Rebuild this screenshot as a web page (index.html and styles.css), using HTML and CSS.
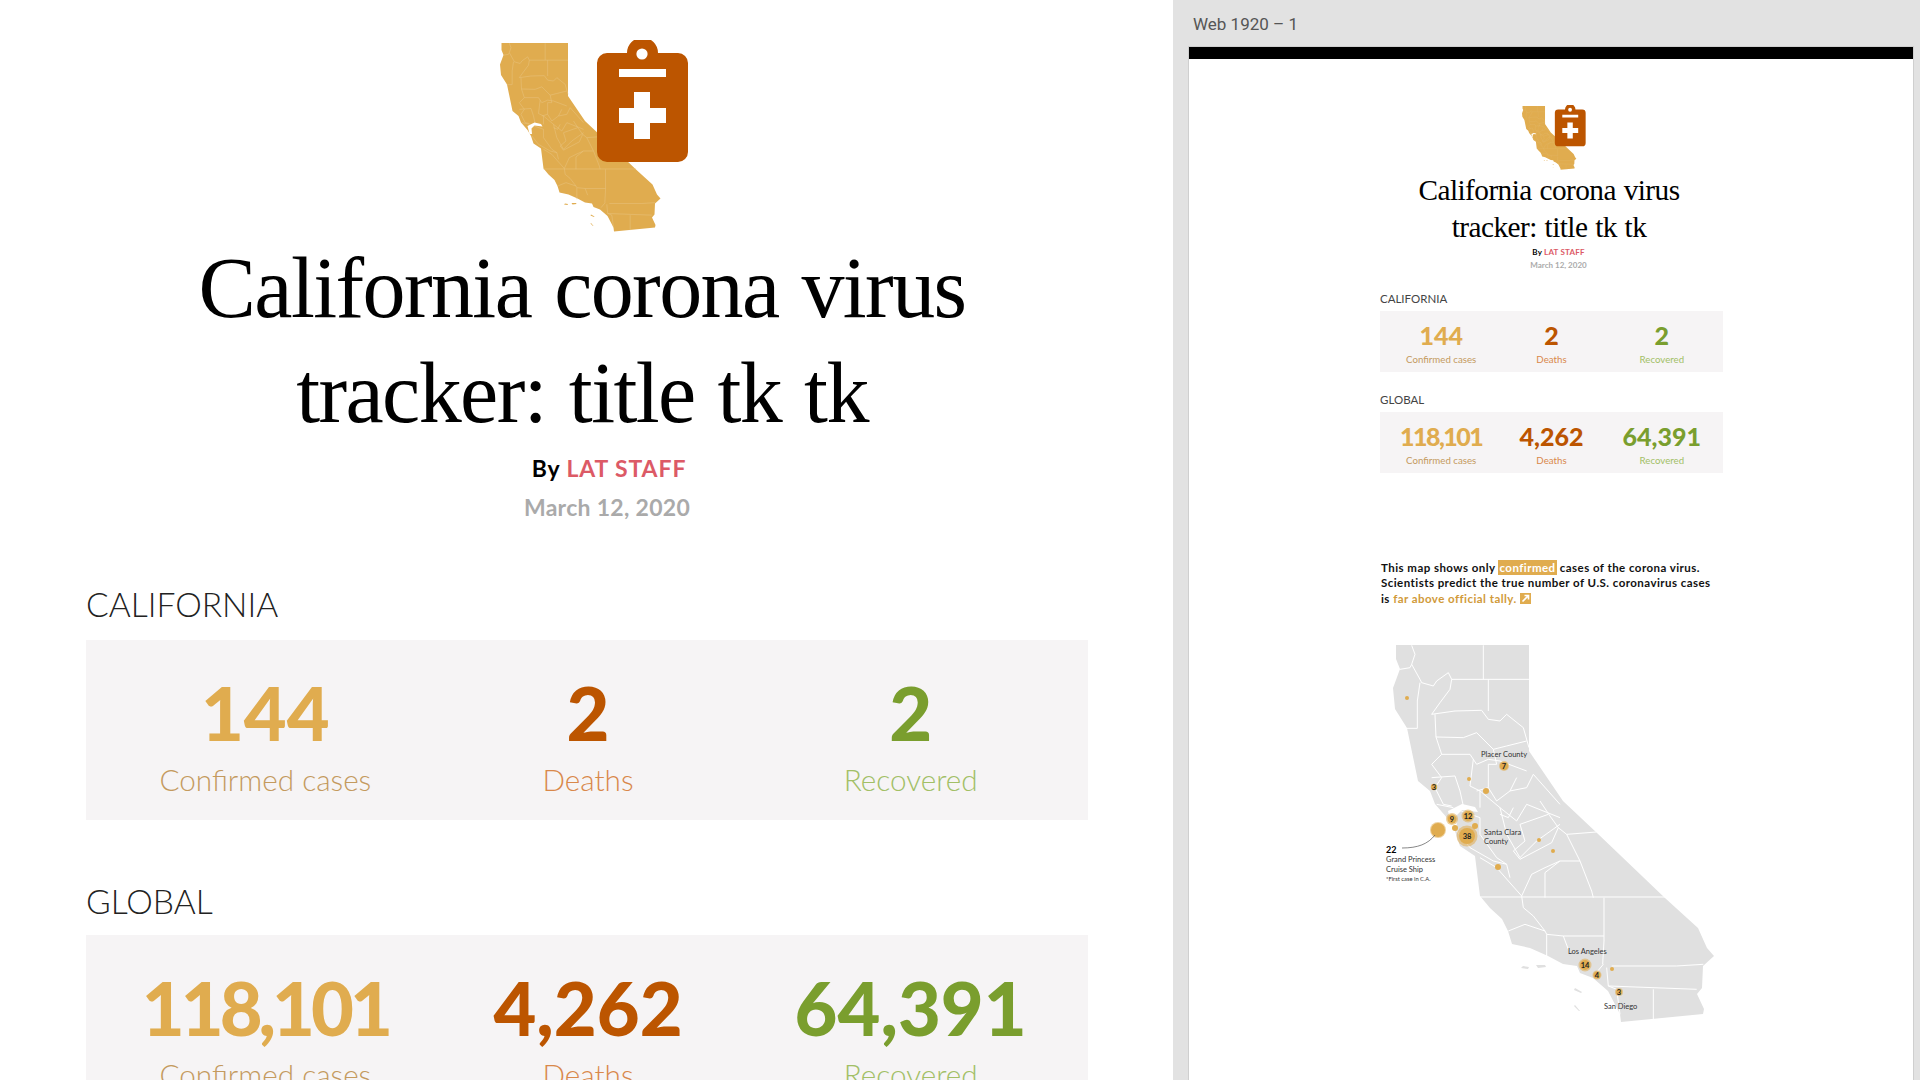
FILE: index.html
```html
<!DOCTYPE html>
<html lang="en">
<head>
<meta charset="utf-8">
<title>California corona virus tracker</title>
<link rel="stylesheet" href="styles.css">
</head>
<body>
<svg class="defs" width="0" height="0" aria-hidden="true">
  <defs>
    <g id="ca-shape">
      <path class="ca-land" d="M1396 644L1529 644L1529 750L1563 800L1597 832L1665 897L1698 927L1707 947L1714 955L1703 965L1702 987L1697 993L1704 1008L1703 1013L1621 1021L1620 1013L1608 990L1593 977L1580 972L1577 965L1563 963L1548 955L1530 947L1512 943L1508 930L1502 918L1490 907L1480 895L1475 855L1460 845L1455 830L1448 818L1435 803L1430 790L1418 780L1407 727L1395 708L1393 687L1400 668L1396 658Z"/>
      <path class="ca-land" d="M1523 965l6 1l-1 2l-7-1zM1536 964l9 0l1 2l-8 1zM1575 987l7 4l-1 1l-7-3zM1575 1004l5 6l-1 0l-5-5z"/>
      <g class="ca-lines" transform="translate(1360 630) scale(.3333)">
        <path d="M370 43V145M275 145H507M155 43L165 70L155 100L180 145L185 155L220 165L230 150L265 125L275 145L270 175L240 215L215 250M120 115L150 110L155 100M180 155L172 210V292H140M385 145V240M215 250L285 240L365 238L385 265L420 270L440 250L490 290L507 350M225 250L228 318M228 318L310 320M310 320L350 305L375 330L400 355L440 345L500 330M228 318L245 370L215 400L245 440L225 470L250 520L275 525M245 370H330L350 400L385 385L420 390L500 420M285 435L215 440M285 435L300 480L310 525M340 385L330 465L360 480V530M400 355L410 400L385 400L385 470L350 480M385 470L410 510L450 480L500 470L520 430M450 480L470 440M520 430L600 520M360 480L420 530L470 570L500 520L600 560M420 530L440 610L480 680L530 630L600 580M290 535L360 560V610L410 680L440 700L450 740M290 600L330 650L400 690L440 700M230 520L280 530"/>
      </g>
      <g class="ca-lines" transform="translate(1480 800) scale(.3333)">
        <path d="M0 288H555M372 290V420L368 490M125 285L130 320L160 345L195 390L200 400L250 405H372M200 400V470M85 390L135 370L195 390M250 405L265 445M395 495H590L670 490M385 555L650 565M520 565V655M195 290V215L240 180H300L335 270L340 290M300 180L260 100L350 93M125 285L155 220L195 200L240 180M0 170L50 200L85 240L125 285M260 100L235 80L210 45L180 0M100 150L120 175L215 125L235 80M100 150L135 120L120 70L205 40M60 40L85 50L100 20M380 500L385 555L410 565L420 640M345 520L370 490"/>
      </g>
      <path class="ca-bay" d="M1448 810L1462 803L1475 806L1478 811L1462 809L1456 815L1457 826L1452 826Z"/>
    </g>
    <symbol id="logo" viewBox="497 40 195 192">
      <use href="#ca-shape" transform="translate(-196.500 -279) scale(.5)"/>
      <path class="clip-body" d="M606 53H627A15.500 15.500 0 0 1 658 53H678A10 10 0 0 1 688 63V152A10 10 0 0 1 678 162H607A10 10 0 0 1 597 152V63A10 10 0 0 1 607 53Z"/>
      <circle class="clip-mark" cx="642" cy="54" r="5.600"/>
      <path class="clip-mark" d="M619 69H666V77H619ZM634 92H650V108H666V123H650V139H634V123H619V108H634Z"/>
    </symbol>
  </defs>
</svg>

<main class="screen">
  <section class="zoomed">
    <svg class="logo logo-big" role="img" aria-label="California tracker logo"><use href="#logo"/></svg>
    <h1 class="title title-big">California corona virus<br>tracker: title tk tk</h1>
    <p class="byline byline-big">By <span class="staff">LAT STAFF</span></p>
    <p class="date date-big">March 12, 2020</p>

    <h2 class="region region-big region-ca">CALIFORNIA</h2>
    <div class="stats stats-big">
      <div class="stat gold"><b>144</b><span>Confirmed cases</span></div>
      <div class="stat rust"><b>2</b><span>Deaths</span></div>
      <div class="stat green"><b>2</b><span>Recovered</span></div>
    </div>
    <h2 class="region region-big region-gl">GLOBAL</h2>
    <div class="stats stats-big">
      <div class="stat gold"><b class="tight">118,101</b><span>Confirmed cases</span></div>
      <div class="stat rust"><b>4,262</b><span>Deaths</span></div>
      <div class="stat green"><b>64,391</b><span>Recovered</span></div>
    </div>
  </section>

  <section class="artboard-area">
    <div class="artboard-name">Web 1920 – 1</div>
    <div class="artboard">
      <div class="blackbar"></div>
      <svg class="logo logo-small" role="img" aria-label="California tracker logo"><use href="#logo"/></svg>
      <h1 class="title title-small">California corona virus<br>tracker: title tk tk</h1>
      <p class="byline byline-small">By <span class="staff">LAT STAFF</span></p>
      <p class="date date-small">March 12, 2020</p>

      <h2 class="region region-small region-ca-s">CALIFORNIA</h2>
      <div class="stats stats-small">
        <div class="stat gold"><b>144</b><span>Confirmed cases</span></div>
        <div class="stat rust"><b>2</b><span>Deaths</span></div>
        <div class="stat green"><b>2</b><span>Recovered</span></div>
      </div>
      <h2 class="region region-small region-gl-s">GLOBAL</h2>
      <div class="stats stats-small">
        <div class="stat gold"><b class="tight">118,101</b><span>Confirmed cases</span></div>
        <div class="stat rust"><b>4,262</b><span>Deaths</span></div>
        <div class="stat green"><b>64,391</b><span>Recovered</span></div>
      </div>

      <p class="note">This map shows only <mark>confirmed</mark> cases of the corona virus.<br>Scientists predict the true number of U.S. coronavirus cases<br>is <a href="#">far above official tally.</a> <svg class="ext" viewBox="0 0 11 11" aria-hidden="true"><rect width="11" height="11" fill="#e0ac4f"/><path d="M2.500 8.500L8 3M4.500 2.500H8.500V6.500" fill="none" stroke="#fff" stroke-width="1.600"/></svg></p>

      <svg class="map" viewBox="1380 640 350 400" role="img" aria-label="California map of confirmed cases">
        <use href="#ca-shape"/>
        <g class="halo">
          <circle cx="1468" cy="815" r="6.500"/><circle cx="1452" cy="818" r="6"/><circle cx="1467" cy="835" r="10.500"/><circle cx="1438" cy="829" r="8"/><circle cx="1585" cy="964" r="6.500"/><circle cx="1597" cy="974" r="4.500"/><circle cx="1504" cy="765" r="5"/><circle cx="1619" cy="991" r="4"/>
        </g>
        <g class="dot">
          <circle cx="1407" cy="697" r="2"/><circle cx="1504" cy="765" r="4"/><circle cx="1469" cy="778" r="2"/><circle cx="1434" cy="786" r="3.200"/><circle cx="1486" cy="790" r="3"/><circle cx="1468" cy="815" r="5"/><circle cx="1452" cy="818" r="4.500"/><circle cx="1455" cy="827" r="3"/><circle cx="1475" cy="825" r="3"/><circle cx="1467" cy="835" r="8"/><circle cx="1438" cy="829" r="7"/><circle cx="1539" cy="839" r="2"/><circle cx="1553" cy="850" r="2"/><circle cx="1498" cy="866" r="3"/><circle cx="1585" cy="964" r="5"/><circle cx="1597" cy="974" r="3.500"/><circle cx="1612" cy="968" r="2"/><circle cx="1619" cy="991" r="3"/>
        </g>
        <path class="leader" d="M1402 847C1418 847 1428 843 1435 834"/>
        <g class="pin-num">
          <text x="1504" y="768">7</text><text x="1434" y="789">3</text><text x="1468" y="818">12</text><text x="1452" y="821">9</text><text x="1467" y="838">38</text><text x="1585" y="967">14</text><text x="1597" y="977">4</text><text x="1619" y="994">3</text>
        </g>
        <g class="map-label">
          <text x="1481" y="756">Placer County</text>
          <text x="1484" y="834">Santa Clara</text>
          <text x="1484" y="843">County</text>
          <text x="1568" y="953">Los Angeles</text>
          <text x="1604" y="1008">San Diego</text>
          <text x="1386" y="861">Grand Princess</text>
          <text x="1386" y="871">Cruise Ship</text>
          <text class="map-small" x="1386" y="880">*First case in C.A.</text>
          <text class="map-strong" x="1386" y="852">22</text>
        </g>
      </svg>
    </div>
  </section>
</main>
</body>
</html>
```

FILE: styles.css
```css
* { box-sizing: border-box; }
html, body { margin: 0; padding: 0; height: 100%; background: #fff; }
body { overflow: hidden; font-family: Lato, "Liberation Sans", sans-serif; }
.defs { position: absolute; }
h1, h2, p { margin: 0; font-weight: normal; }

.screen { display: flex; width: 1920px; height: 1080px; overflow: hidden; }
.zoomed { width: 1173px; height: 1080px; flex: none; padding-top: 40px; overflow: hidden; background: #fff; }
.artboard-area { flex: 1; height: 1080px; padding-left: 16px; background: #e2e2e2; overflow: hidden; }
.artboard-name { height: 47px; padding: 16px 0 0 4px; font: 400 17px/17px Roboto, sans-serif; color: #555; }
.artboard { width: 724px; height: 1033px; background: #fff; box-shadow: 0 0 0 1px #cfcfcf; }
.blackbar { height: 12px; background: #000; }

/* shared article parts */
.logo { display: block; }
.logo-big { width: 195px; height: 192px; margin-left: 497px; }
.logo-small { width: 66px; height: 65px; margin: 46px 0 0 332px; }

.title { font-family: "Liberation Serif", serif; color: #000; text-align: center; }
.title-big { width: 1164px; margin-top: 4px; font-size: 86px; line-height: 105px; letter-spacing: -1.600px; word-spacing: 3px; }
.title-small { width: 720px; margin-top: 2px; font-size: 29.300px; line-height: 36.500px; letter-spacing: -.55px; word-spacing: 1px; }

.byline, .date { text-align: center; font-weight: 700; }
.byline { color: #000; }
.staff { color: #dc5a66; }
.date { color: #aaa; }
.byline-big { width: 1218px; margin-top: 7.500px; font-size: 23px; line-height: 28px; letter-spacing: .9px; }
.date-big { width: 1214px; margin-top: 11px; font-size: 23px; line-height: 28px; letter-spacing: .3px; }
.byline-small { width: 739px; margin-top: 3px; font-size: 8px; line-height: 9px; letter-spacing: .2px; }
.date-small { width: 739px; margin-top: 4px; font-size: 8px; line-height: 9px; }

.region { color: #222; font-weight: 300; }
.region-big { margin-left: 86px; font-size: 33.600px; line-height: 40px; }
.region-ca { margin-top: 63.500px; margin-bottom: 16px; }
.region-gl { margin-top: 61px; margin-bottom: 14px; }
.region-small { margin-left: 191px; font-size: 11.500px; line-height: 14px; color: #444; font-weight: 400; margin-bottom: 4.500px; }
.region-ca-s { margin-top: 22px; }
.region-gl-s { margin-top: 21.500px; }

.stats { display: grid; grid-template-columns: repeat(3, 1fr); background: #f6f4f5; }
.stat { display: flex; flex-direction: column; align-items: center; }
.stat b { font-weight: 900; }
.stat span { font-weight: 300; }
.stats-big { width: 1002px; height: 180px; margin: 2px 0 0 86px; padding: 28px 16px 0 18px; }
.stats-big .stat b { font-size: 74px; line-height: 90px; letter-spacing: 0; }
.stats-big .stat b.tight { letter-spacing: -4px; }
.stats-big .stat span { margin-top: 0; font-size: 29.700px; line-height: 44px; }
.stats-small { width: 343px; height: 61px; margin: 0 0 0 191px; padding: 9px 6px 0 6px; }
.stats-small .stat b { font-size: 25px; line-height: 30px; letter-spacing: 0; }
.stats-small .stat b.tight { letter-spacing: -1.500px; }
.stats-small .stat span { margin-top: 2px; font-size: 9.700px; line-height: 14px; font-weight: 400; }

.gold b { color: #e0ac4f; }
.gold span { color: #c49a5e; }
.rust b { color: #bc5500; }
.rust span { color: #d9884a; }
.green b { color: #7a9e2e; }
.green span { color: #a2bf66; }

.note { margin: 87px 0 0 192px; font-size: 11.500px; line-height: 15.500px; font-weight: 700; letter-spacing: .45px; color: #111; }
.note mark { padding: 1px 1px; background: #e0ac4f; color: #fff; }
.note a { color: #d19a3a; text-decoration: none; }
.ext { display: inline-block; width: 11px; height: 11px; vertical-align: -1px; }

.map { display: block; width: 350px; height: 400px; margin: 34.500px 0 0 191px; }
.ca-land { fill: var(--land, #e0e0e0); }
.ca-bay { fill: #fff; }
.ca-lines path { fill: none; stroke: var(--lines, #fff); stroke-width: 3; stroke-linejoin: round; }
.logo { --land: #e0ac4f; --lines: #e9c482; }
.clip-body { fill: #bc5500; }
.clip-mark { fill: #fff; }
.halo circle { fill: #e0ac4f; opacity: .55; }
.dot circle { fill: #e0ac4f; }
.leader { fill: none; stroke: #555; stroke-width: .7; }
.pin-num text { font: 700 7.500px Lato, sans-serif; fill: #222; text-anchor: middle; }
.map-label text { font: 400 7.500px Lato, sans-serif; fill: #333; }
.map-label .map-small { font-size: 5.800px; }
.map-label .map-strong { font-size: 9px; font-weight: 700; fill: #000; }
```
